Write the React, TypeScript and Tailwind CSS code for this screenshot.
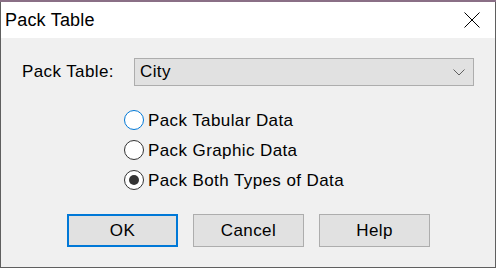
import React, { useState } from 'react';

const font = { fontFamily: '"Liberation Sans", Arial, sans-serif' };

const Radio: React.FC<{ label: string; checked: boolean; focused?: boolean; onClick: () => void }> = ({ label, checked, focused, onClick }) => (
    <div className="flex items-center h-[20px] gap-[4px] cursor-default" onClick={onClick}>
        <div
            className={`w-[20px] h-[20px] rounded-full border bg-white flex items-center justify-center ${focused ? 'border-[#0078d7]' : 'border-[#333333]'}`}
        >
            {checked && <div className="w-[10px] h-[10px] rounded-full bg-[#333333]" />}
        </div>
        <span className="text-[17px] tracking-[0.4px] text-black leading-none">{label}</span>
    </div>
);

const App: React.FC = () => {
    const [mode, setMode] = useState(2);

    return (
        <div className="w-[496px] h-[268px] flex flex-col bg-[#8a6f86] overflow-hidden" style={font}>
            <div className="h-[2px] shrink-0" />
            {/* Window */}
            <div className="flex-1 flex flex-col border-l border-r border-b border-[#5f5f5f]">
                {/* Title bar */}
                <div className="h-[36px] bg-white flex items-center justify-between pl-[4px] pr-[15px]">
                    <span className="text-[18px] tracking-[0.2px] text-black">Pack Table</span>
                    <svg width="16" height="16" viewBox="0 0 16 16">
                        <path d="M0.5 0.5 L15.5 15.5 M15.5 0.5 L0.5 15.5" stroke="#000" strokeWidth="1" fill="none" />
                    </svg>
                </div>

                {/* Body */}
                <div className="flex-1 bg-[#f0f0f0] flex flex-col pt-[20px] pl-[21px]">
                    <div className="flex items-center">
                        <span className="w-[112px] text-[17px] tracking-[0.4px] text-black">Pack Table:</span>
                        <div className="w-[340px] h-[28px] bg-[#e1e1e1] border border-[#adadad] flex items-center justify-between pl-[5px] pr-[8px]">
                            <span className="text-[17px] tracking-[0.4px] text-black">City</span>
                            <svg width="12" height="7" viewBox="0 0 12 7">
                                <path d="M0.5 0.5 L6 6 L11.5 0.5" stroke="#606060" strokeWidth="1" fill="none" />
                            </svg>
                        </div>
                    </div>

                    <div className="flex flex-col gap-[10px] pl-[102px] mt-[24px]">
                        <Radio label="Pack Tabular Data" checked={mode === 0} focused onClick={() => setMode(0)} />
                        <Radio label="Pack Graphic Data" checked={mode === 1} onClick={() => setMode(1)} />
                        <Radio label="Pack Both Types of Data" checked={mode === 2} onClick={() => setMode(2)} />
                    </div>

                    <div className="flex gap-[15px] pl-[45px] mt-[24px]">
                        <button className="w-[111px] h-[33px] bg-[#e1e1e1] border-2 border-[#0078d7] text-[17px] tracking-[0.4px] text-black">OK</button>
                        <button className="w-[111px] h-[33px] bg-[#e1e1e1] border border-[#adadad] text-[17px] tracking-[0.4px] text-black">Cancel</button>
                        <button className="w-[111px] h-[33px] bg-[#e1e1e1] border border-[#adadad] text-[17px] tracking-[0.4px] text-black">Help</button>
                    </div>
                </div>
            </div>
        </div>
    );
};

export default App;
